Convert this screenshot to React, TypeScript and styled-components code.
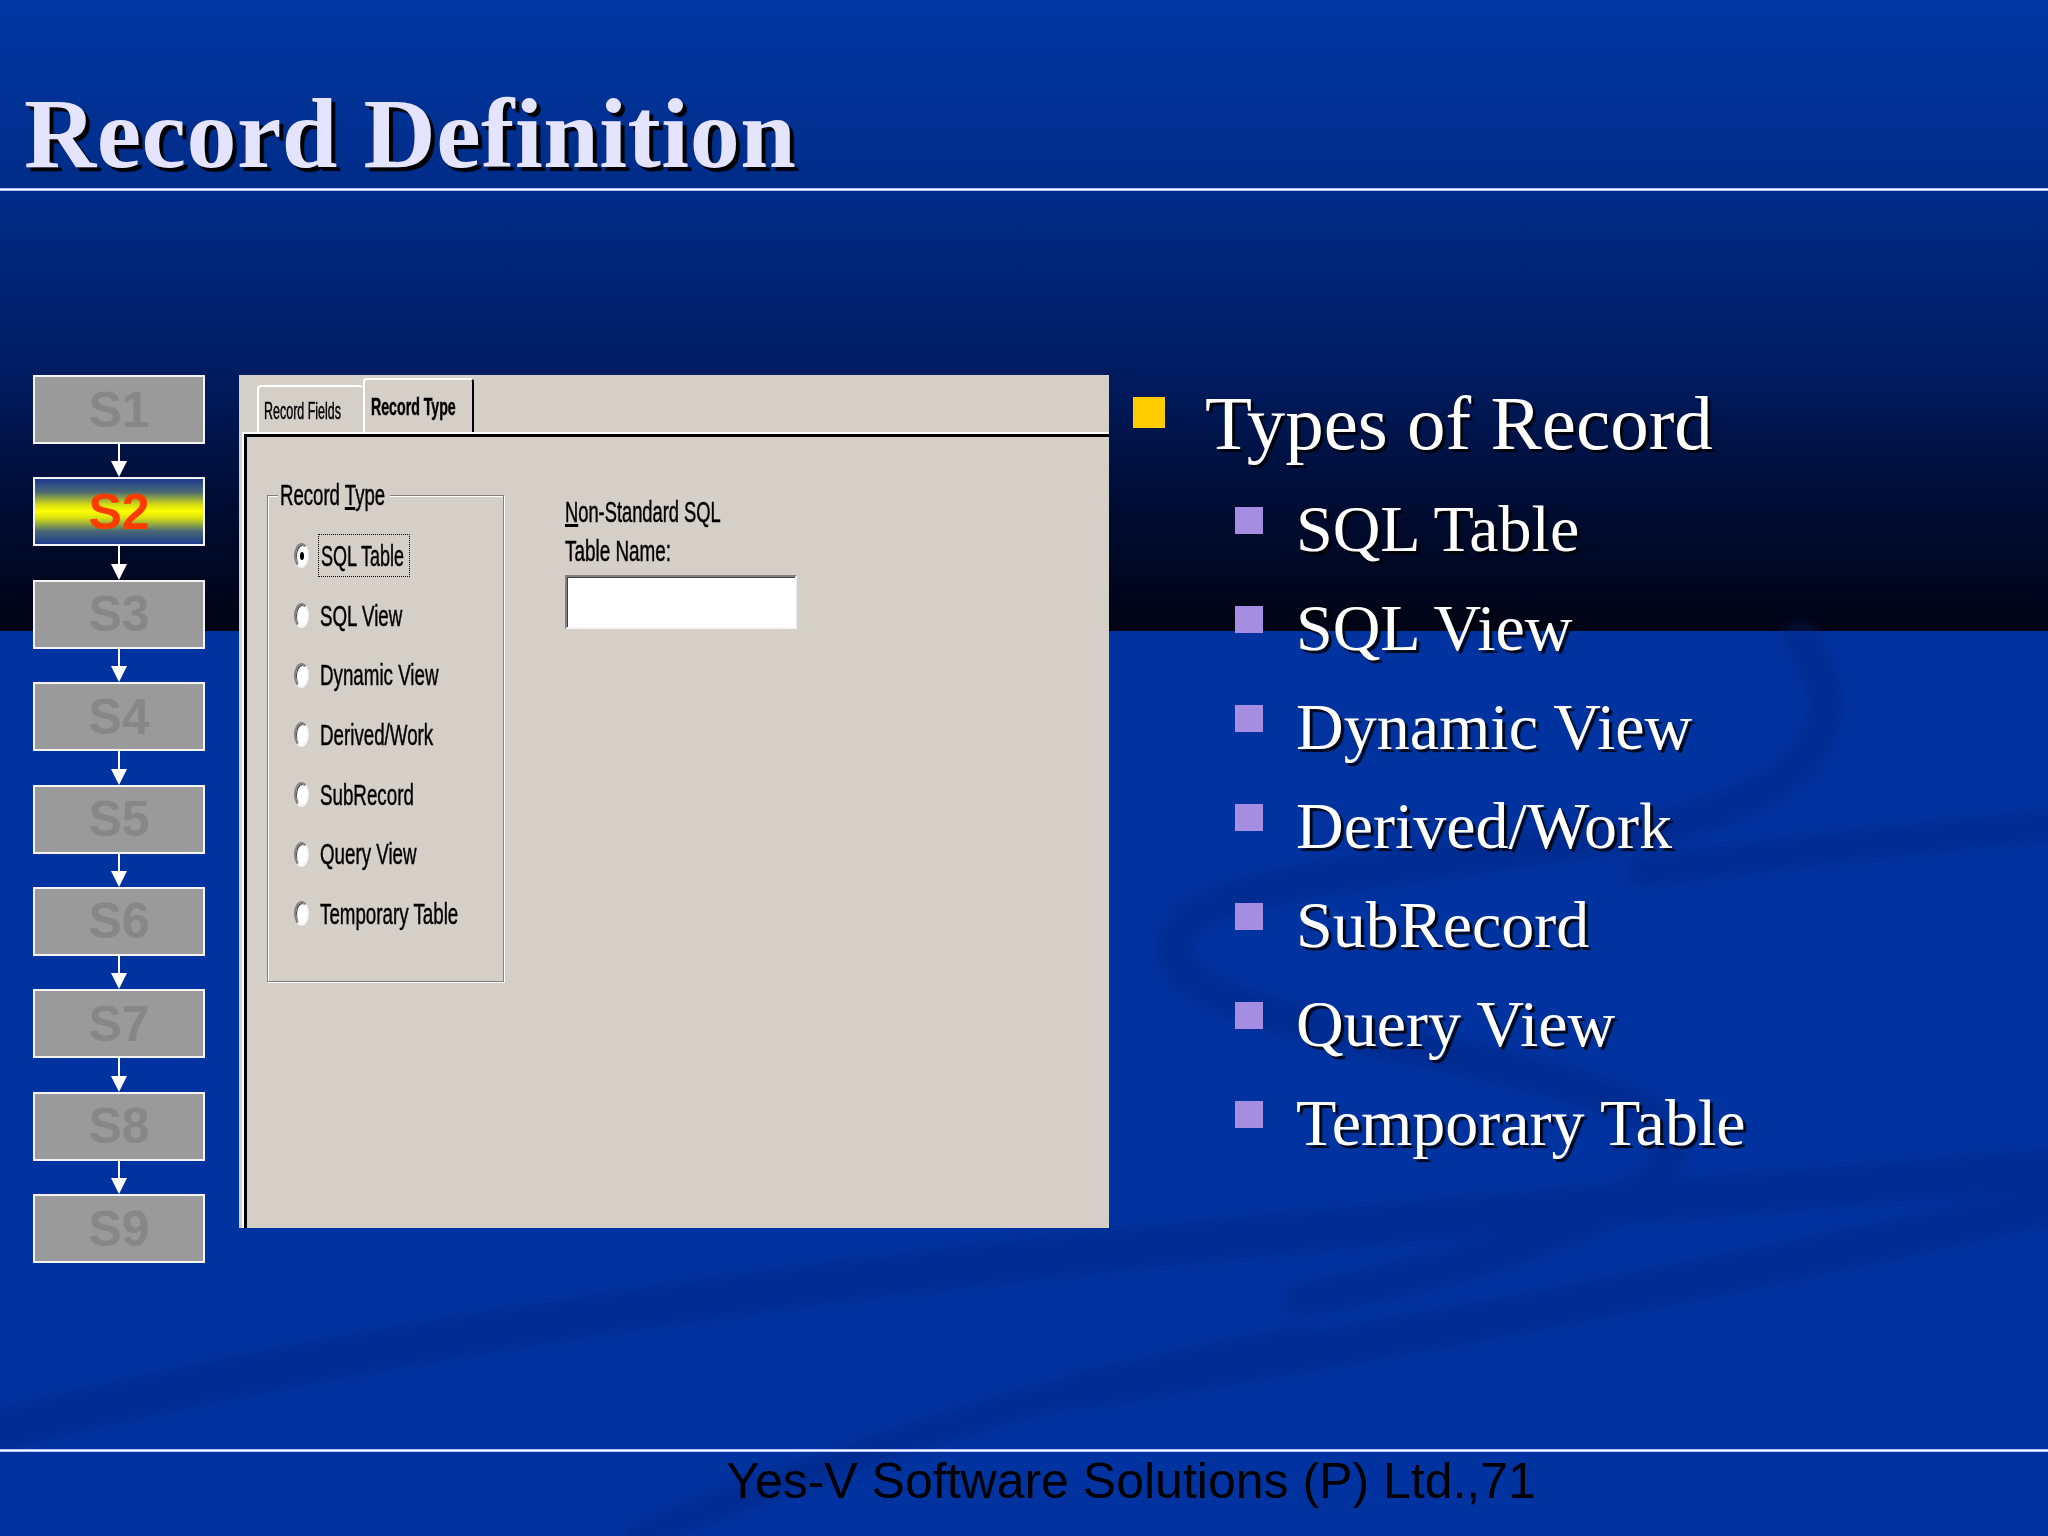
import styled, { createGlobalStyle } from 'styled-components';

const GlobalStyle = createGlobalStyle`
  html, body {
    margin: 0;
    padding: 0;
    background: #0033a0;
  }
  body {
    width: 2048px;
    height: 1536px;
    overflow: hidden;
  }
`;

const STEPS = ['S1', 'S2', 'S3', 'S4', 'S5', 'S6', 'S7', 'S8', 'S9'];
const RECORD_TYPES = ['SQL Table', 'SQL View', 'Dynamic View', 'Derived/Work', 'SubRecord', 'Query View', 'Temporary Table'];

const App = () => {
    return (
        <>
            <GlobalStyle />
            <Page>
                <Swirls viewBox="0 0 2048 1536" preserveAspectRatio="none">
                    <defs>
                        <filter id="soft">
                            <feGaussianBlur stdDeviation="7" />
                        </filter>
                    </defs>
                    <g fill="none" stroke="#00247c" strokeLinecap="round" filter="url(#soft)" opacity="0.42">
                        <path d="M1800 640 C1860 720 1820 800 1620 835 C1380 875 1160 880 1175 955 C1190 1030 1500 1045 1640 1110 C1730 1160 1620 1240 1300 1300" strokeWidth="34" />
                        <path d="M2048 826 C1900 838 1760 856 1640 872" strokeWidth="30" />
                        <path d="M2048 1205 C1800 1262 1500 1322 1080 1390" strokeWidth="38" />
                        <path d="M0 1430 C600 1280 1350 1225 2048 1170" strokeWidth="40" />
                        <path d="M640 1536 C900 1430 1100 1380 1300 1340" strokeWidth="28" />
                    </g>
                </Swirls>

                <Header>
                    <Title>Record Definition</Title>
                </Header>
                <Rule />

                <Main>
                    <StepColumn>
                        {STEPS.map((step, i) => (
                            <StepGroup key={step}>
                                {i > 0 && (
                                    <Connector>
                                        <ConnectorLine />
                                        <ConnectorHead />
                                    </Connector>
                                )}
                                <StepBox $active={step === 'S2'}>{step}</StepBox>
                            </StepGroup>
                        ))}
                    </StepColumn>

                    <Dialog>
                        <TabStrip>
                            <Tab>
                                <Narrow $size={24} $scale={0.52}>Record Fields</Narrow>
                            </Tab>
                            <Tab $active>
                                <Narrow $size={24} $scale={0.59} $bold>Record Type</Narrow>
                            </Tab>
                        </TabStrip>
                        <Frame>
                            <GroupBox>
                                <Legend>
                                    <Narrow $size={30} $scale={0.62}>
                                        Record <u>T</u>ype
                                    </Narrow>
                                </Legend>
                                <RadioList>
                                    {RECORD_TYPES.map((type, i) => (
                                        <RadioRow key={type}>
                                            <Radio $checked={i === 0} />
                                            {i === 0 ? (
                                                <FocusBox>
                                                    <Narrow $size={30} $scale={0.6}>{type}</Narrow>
                                                </FocusBox>
                                            ) : (
                                                <Narrow $size={30} $scale={0.625}>{type}</Narrow>
                                            )}
                                        </RadioRow>
                                    ))}
                                </RadioList>
                            </GroupBox>

                            <TableNameField>
                                <FieldLabel>
                                    <Narrow $size={30} $scale={0.61}>
                                        <u>N</u>on-Standard SQL
                                    </Narrow>
                                </FieldLabel>
                                <FieldLabel>
                                    <Narrow $size={30} $scale={0.63}>Table Name:</Narrow>
                                </FieldLabel>
                                <TextBox />
                            </TableNameField>
                        </Frame>
                    </Dialog>

                    <BulletList>
                        <MainItem>
                            <YellowSquare />
                            <span>Types of Record</span>
                        </MainItem>
                        <SubList>
                            {RECORD_TYPES.map((type) => (
                                <SubItem key={type}>
                                    <LavenderSquare />
                                    <span>{type}</span>
                                </SubItem>
                            ))}
                        </SubList>
                    </BulletList>
                </Main>

                <Footer>
                    <Rule />
                    <FooterText>Yes-V Software Solutions (P) Ltd.,71</FooterText>
                </Footer>
            </Page>
        </>
    );
};

export default App;

const Page = styled.div`
    position: relative;
    width: 2048px;
    height: 1536px;
    display: flex;
    flex-direction: column;
    overflow: hidden;
    background:
        linear-gradient(
                to bottom,
                #0037a3 0px,
                #002c88 188px,
                #001c60 375px,
                #000c34 500px,
                #000414 631px,
                transparent 631px
            ),
        #0033a0;
`;

const Swirls = styled.svg`
    position: absolute;
    inset: 0;
    width: 100%;
    height: 100%;
    pointer-events: none;
    z-index: 0;
`;

const Header = styled.header`
    position: relative;
    z-index: 1;
    height: 188px;
    box-sizing: border-box;
    padding: 84px 0 0 24px;
`;

const Title = styled.h1`
    margin: 0;
    font-family: 'Liberation Serif', 'Times New Roman', serif;
    font-weight: 700;
    font-size: 100px;
    line-height: 100px;
    letter-spacing: 0.5px;
    color: #e4e4ff;
    text-shadow: 4px 4px 1px #000;
`;

const Rule = styled.div`
    position: relative;
    z-index: 1;
    height: 3px;
    background: linear-gradient(to bottom, #8fa9ff, #ffffff, #8fa9ff);
`;

const Main = styled.main`
    position: relative;
    z-index: 1;
    margin-top: 184px;
    display: flex;
    align-items: flex-start;
    padding-left: 33px;
`;

const StepColumn = styled.div`
    width: 172px;
    display: flex;
    flex-direction: column;
    flex-shrink: 0;
`;

const StepGroup = styled.div`
    display: flex;
    flex-direction: column;
    align-items: center;
`;

const Connector = styled.div`
    height: 33.4px;
    display: flex;
    flex-direction: column;
    align-items: center;
`;

const ConnectorLine = styled.div`
    flex: 1;
    width: 2px;
    background: #fff;
`;

const ConnectorHead = styled.div`
    width: 0;
    height: 0;
    border-left: 8px solid transparent;
    border-right: 8px solid transparent;
    border-top: 16px solid #fff;
`;

const StepBox = styled.div<{ $active?: boolean }>`
    width: 172px;
    height: 69px;
    box-sizing: border-box;
    border: 2px solid #f4f4f4;
    display: flex;
    align-items: center;
    justify-content: center;
    font-family: 'Liberation Sans', Arial, sans-serif;
    font-weight: 700;
    font-size: 50px;
    color: ${({ $active }) => ($active ? '#ff3c00' : '#878787')};
    background: ${({ $active }) =>
        $active
            ? 'linear-gradient(to bottom, #1d3a8e 0%, #4a6a74 20%, #d8e010 40%, #ffff00 50%, #d8e010 60%, #4a6a74 80%, #1d3a8e 100%)'
            : '#9a9a9a'};
`;

const Dialog = styled.div`
    margin-left: 34px;
    width: 870px;
    height: 853px;
    flex-shrink: 0;
    background: #d4d0c8;
    display: flex;
    flex-direction: column;
    overflow: hidden;
`;

const TabStrip = styled.div`
    height: 57px;
    display: flex;
    align-items: flex-end;
    padding-left: 18px;
    flex-shrink: 0;
`;

const Tab = styled.div<{ $active?: boolean }>`
    width: ${({ $active }) => ($active ? 111 : 106)}px;
    height: ${({ $active }) => ($active ? 54 : 47)}px;
    box-sizing: border-box;
    border-top: 2px solid #fff;
    border-left: 2px solid #fff;
    border-right: ${({ $active }) => ($active ? '2px solid #000' : 'none')};
    border-radius: 4px 4px 0 0;
    padding: ${({ $active }) => ($active ? '15px 0 0 6px' : '12px 0 0 5px')};
    line-height: 24px;
    overflow: visible;
`;

const Narrow = styled.span<{ $size: number; $scale?: number; $bold?: boolean }>`
    display: inline-block;
    font-family: 'Liberation Sans', Arial, sans-serif;
    font-size: ${({ $size }) => $size}px;
    font-weight: ${({ $bold }) => ($bold ? 700 : 400)};
    color: #000;
    -webkit-text-stroke: 0.5px #000;
    white-space: nowrap;
    transform: scaleX(${({ $scale }) => $scale ?? 0.6});
    transform-origin: left center;
`;

const Frame = styled.div`
    flex: 1;
    margin-left: 3px;
    border-top: 2px solid #fff;
    border-left: 2px solid #fff;
    box-shadow: inset 3px 3px 0 #000;
    padding: 46px 0 0 23px;
    display: flex;
    align-items: flex-start;
    gap: 61px;
`;

const GroupBox = styled.fieldset`
    margin: 0;
    width: 237px;
    height: 502px;
    box-sizing: border-box;
    border: 1px solid #808080;
    box-shadow: inset 1px 1px 0 #fff, 1px 1px 0 #fff;
    padding: 16px 0 0 10px;
    min-inline-size: 0;
`;

const Legend = styled.legend`
    padding: 0 2px;
    width: 108px;
    height: 30px;
    line-height: 30px;
    overflow: visible;
    background: #d4d0c8;
`;

const RadioList = styled.div`
    margin-left: 16px;
    display: flex;
    flex-direction: column;
    line-height: 30px;
`;

const RadioRow = styled.div`
    height: 59.7px;
    display: flex;
    align-items: center;
    gap: 11px;
`;

const Radio = styled.span<{ $checked?: boolean }>`
    width: 15px;
    height: 25px;
    box-sizing: border-box;
    flex-shrink: 0;
    border-radius: 50%;
    background: #fff;
    border: 2px solid;
    border-color: #808080 #f4f4f4 #f4f4f4 #808080;
    box-shadow: inset 1px 1px 0 #404040;
    display: flex;
    align-items: center;
    justify-content: center;

    &::after {
        content: '';
        width: 4px;
        height: 8px;
        border-radius: 50%;
        background: #000;
        display: ${({ $checked }) => ($checked ? 'block' : 'none')};
    }
`;

const FocusBox = styled.span`
    display: flex;
    align-items: center;
    width: 92px;
    height: 43px;
    box-sizing: border-box;
    margin-left: -2px;
    padding-left: 2px;
    border: 1px dotted #000;
    overflow: visible;
`;

const TableNameField = styled.div`
    margin-top: 12px;
    display: flex;
    flex-direction: column;
`;

const FieldLabel = styled.div`
    height: 39px;
    line-height: 39px;
`;

const TextBox = styled.div`
    margin-top: 5px;
    width: 232px;
    height: 54px;
    box-sizing: border-box;
    background: #fff;
    border: 2px solid;
    border-color: #808080 #f4f4f4 #f4f4f4 #808080;
    box-shadow: inset 1px 1px 0 #404040;
`;

const BulletList = styled.div`
    margin-left: 24px;
    margin-top: -2px;
    display: flex;
    flex-direction: column;
    font-family: 'Liberation Serif', 'Times New Roman', serif;
    color: #fff;
    text-shadow: 3px 3px 1px rgba(0, 0, 0, 0.85);
    white-space: nowrap;
`;

const MainItem = styled.div`
    display: flex;
    align-items: flex-start;
    font-size: 77px;
    line-height: 100px;
`;

const YellowSquare = styled.span`
    width: 32px;
    height: 31px;
    margin: 24px 40px 0 0;
    background: #ffcc00;
    flex-shrink: 0;
`;

const SubList = styled.div`
    margin-top: 6px;
    padding-left: 102px;
    display: flex;
    flex-direction: column;
`;

const SubItem = styled.div`
    display: flex;
    align-items: flex-start;
    font-size: 66px;
    line-height: 99px;
`;

const LavenderSquare = styled.span`
    width: 28px;
    height: 27px;
    margin: 28px 33px 0 0;
    background: #a58de2;
    flex-shrink: 0;
`;

const Footer = styled.footer`
    position: relative;
    z-index: 1;
    margin-top: auto;
    height: 87px;
    display: flex;
    flex-direction: column;
`;

const FooterText = styled.div`
    padding-left: 214px;
    text-align: center;
    font-family: 'Liberation Sans', Arial, sans-serif;
    font-size: 50px;
    color: #000;
`;
